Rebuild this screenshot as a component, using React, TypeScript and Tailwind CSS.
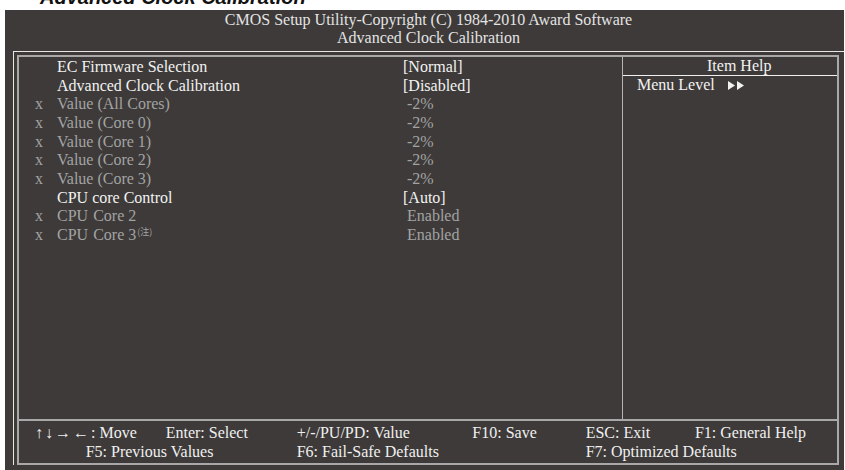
import React from "react";

const serif = { fontFamily: '"Liberation Serif", "Times New Roman", serif' };

type Row = { x?: boolean; label: React.ReactNode; value: string; bracket: boolean; dim: boolean };

const rows: Row[] = [
  { label: "EC Firmware Selection", value: "[Normal]", bracket: true, dim: false },
  { label: "Advanced Clock Calibration", value: "[Disabled]", bracket: true, dim: false },
  { x: true, label: "Value (All Cores)", value: "-2%", bracket: false, dim: true },
  { x: true, label: "Value (Core 0)", value: "-2%", bracket: false, dim: true },
  { x: true, label: "Value (Core 1)", value: "-2%", bracket: false, dim: true },
  { x: true, label: "Value (Core 2)", value: "-2%", bracket: false, dim: true },
  { x: true, label: "Value (Core 3)", value: "-2%", bracket: false, dim: true },
  { label: "CPU core Control", value: "[Auto]", bracket: true, dim: false },
  {
    x: true,
    label: (
      <>
        <span className="mr-[1px]">CPU</span> Core 2
      </>
    ),
    value: "Enabled",
    bracket: false,
    dim: true,
  },
  {
    x: true,
    label: (
      <>
        <span className="mr-[1px]">CPU</span> Core 3
        <span
          className="relative top-[-5px] ml-[1px] text-[9px]"
          style={{ fontFamily: '"Noto Sans CJK SC", "Noto Sans CJK JP", sans-serif' }}
        >
          (注)
        </span>
      </>
    ),
    value: "Enabled",
    bracket: false,
    dim: true,
  },
];

export default function App() {
  return (
    <div className="w-[845px] h-[470px] bg-white overflow-hidden" style={serif}>
      {/* cropped page title */}
      <div className="h-[10px] overflow-hidden">
        <div
          className="mt-[-13px] pl-[40px] text-[20px] leading-[20px] font-bold italic text-[#111]"
          style={{ fontFamily: '"Liberation Sans", Arial, sans-serif' }}
        >
          Advanced Clock Calibration
        </div>
      </div>

      {/* BIOS panel */}
      <div className="ml-[5px] w-[839px] h-[460px] bg-[#3d3a39] overflow-hidden text-[16px]">
        <div className="pt-[1px] pl-[8px] h-[41px] text-center leading-[18px] text-[#e4e4e4]">
          <div>CMOS Setup Utility-Copyright (C) 1984-2010 Award Software</div>
          <div>Advanced Clock Calibration</div>
        </div>

        {/* outer white frame */}
        <div className="ml-[8px] w-[860px] border-l border-t border-[#e6e6e6] pt-[3px] pl-[3px]">
          {/* inner gray box */}
          <div className="w-[822px] h-[410px] border-2 border-[#a8a8a8] flex flex-col">
            <div className="flex h-[362px]">
              {/* items */}
              <div className="w-[603px] pt-[1px] leading-[18.67px]">
                {rows.map((r, i) => {
                  const color = r.dim ? "text-[#a3a3a3]" : "text-[#f2f2f2]";
                  return (
                    <div key={i} className={`flex ${color}`}>
                      <div className="w-[16px]" />
                      <div className="w-[22px]">{r.x ? "x" : ""}</div>
                      <div className="w-[346px] whitespace-nowrap">{r.label}</div>
                      <div className={r.bracket ? "" : "pl-[4px]"}>{r.value}</div>
                    </div>
                  );
                })}
              </div>
              {/* item help */}
              <div className="w-[215px] border-l border-[#b4b4b4] text-[#f2f2f2]">
                <div className="h-[19px] border-b border-[#f0f0f0] leading-[18px] pl-[84px]">Item Help</div>
                <div className="flex items-center leading-[18px] pl-[14px]">
                  <span>Menu Level</span>
                  <svg width="20" height="9" viewBox="0 0 20 9" className="ml-[13px] mt-[1px]" fill="#f2f2f2">
                    <polygon points="0,0 7,4.5 0,9" />
                    <polygon points="9,0 16,4.5 9,9" />
                  </svg>
                </div>
              </div>
            </div>

            {/* footer */}
            <div className="border-t-2 border-[#a8a8a8] pt-[2px] leading-[19px] text-[#f0f0f0] whitespace-nowrap">
              <div className="flex pl-[16px]">
                <div className="w-[130.7px]">
                  <span className="tracking-[2px]">↑↓→←</span>: Move
                </div>
                <div className="w-[131px]">Enter: Select</div>
                <div className="w-[175.6px]">+/-/PU/PD: Value</div>
                <div className="w-[113.4px]">F10: Save</div>
                <div className="w-[109.3px]">ESC: Exit</div>
                <div>F1: General Help</div>
              </div>
              <div className="flex pl-[66.7px]">
                <div className="w-[211px]">F5: Previous Values</div>
                <div className="w-[289px]">F6: Fail-Safe Defaults</div>
                <div>F7: Optimized Defaults</div>
              </div>
            </div>
          </div>
        </div>
      </div>
    </div>
  );
}
